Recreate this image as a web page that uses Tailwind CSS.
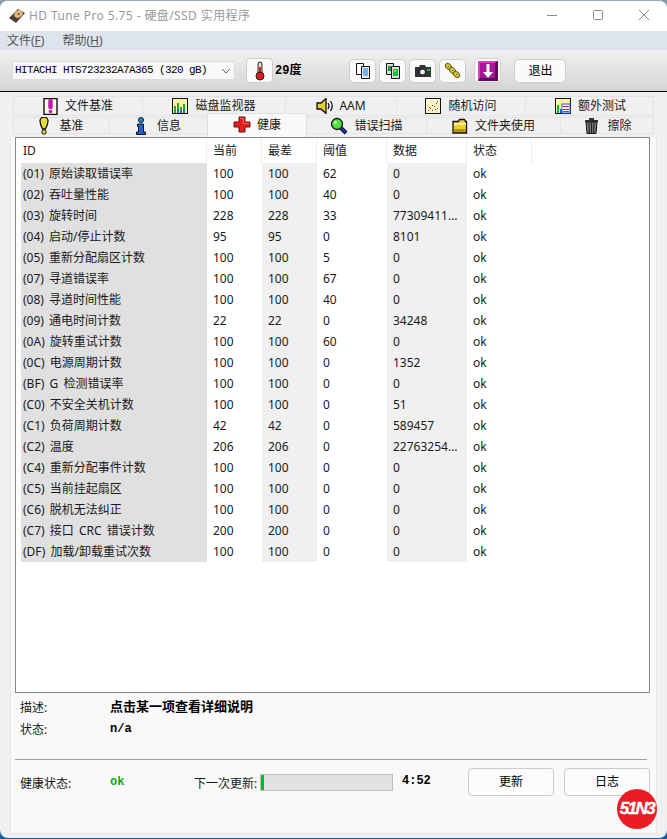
<!DOCTYPE html>
<html lang="zh-CN">

<head>
    <meta charset="UTF-8">
    <title>HD Tune Pro 5.75</title>
    <script src="https://cdn.jsdelivr.net/npm/@tailwindcss/browser@4"></script>
</head>

<body class="w-[667px] h-[839px] overflow-hidden bg-gradient-to-b from-[#8a9bb0] via-[#8a9bb0] to-[#17609c] text-[12px] text-[#1a1a1a] font-['Noto_Sans','Noto_Sans_CJK_SC',sans-serif]">
    <div class="relative w-[667px] h-[838px] rounded-lg border-t border-[#9aa7b5] overflow-hidden bg-[#f0f0f0] flex flex-col pb-[4px]">

        <!-- title bar -->
        <div class="h-[30px] bg-white flex items-center pl-[9px] shrink-0">
            <svg width="16" height="16" viewBox="0 0 16 16">
                <path d="M0 10 L9 1 L16 5 L7 15 Z" fill="#4a4036" />
                <ellipse cx="9.500" cy="6" rx="4.500" ry="3.500" fill="#e4b478" transform="rotate(-35 9.500 6)" />
                <circle cx="9.500" cy="6" r="1" fill="#5a4a38" />
            </svg>
            <span class="ml-[4px] text-[12px] tracking-[0.4px] text-[#9a9a9a]">HD Tune Pro 5.75 - 硬盘/SSD 实用程序</span>
            <div class="ml-auto flex items-center h-full">
                <svg width="46" height="30" viewBox="0 1 46 30"><path d="M18 15.500h10" stroke="#8a8a8a" /></svg>
                <svg width="46" height="30" viewBox="0 1 46 30"><rect x="18.500" y="10.500" width="9" height="9" rx="1" fill="none" stroke="#8a8a8a" /></svg>
                <svg width="46" height="30" viewBox="0 1 46 30"><path d="M18 10l10 10M28 10l-10 10" stroke="#8a8a8a" /></svg>
            </div>
        </div>

        <!-- menu -->
        <div class="h-[19px] bg-[#dde4ec] flex items-center pl-[7px] gap-[18px] text-[#555] shrink-0">
            <span>文件(<span class="underline">F</span>)</span>
            <span>帮助(<span class="underline">H</span>)</span>
        </div>

        <!-- toolbar -->
        <div class="h-[42px] bg-gradient-to-b from-[#f1f1f1] to-[#d4d4d4] border-b border-black flex items-center pl-[12px] shrink-0">
            <div class="w-[223px] h-[19px] bg-[#f8f8f8] border border-[#dcdcdc] rounded-[2px] flex items-center pl-[2px] font-['Liberation_Mono','Noto_Sans_CJK_SC',monospace] text-[11px] tracking-[-0.6px] text-black whitespace-nowrap">
                HITACHI HTS723232A7A365 (320 gB)
                <svg class="ml-auto mr-[3px]" width="10" height="6" viewBox="0 0 10 6"><path d="M1 1l4 4 4-4" fill="none" stroke="#666" /></svg>
            </div>
            <div class="ml-[11px] w-[27px] h-[25px] bg-[#fafafa] border border-[#cfcfcf] rounded-[4px] flex items-center justify-center">
                <svg width="10" height="20" viewBox="0 0 10 20">
                    <rect x="3" y="1" width="4" height="13" rx="2" fill="#f0d8c8" stroke="#222" />
                    <rect x="4" y="6" width="2" height="8" fill="#e01818" />
                    <circle cx="5" cy="15" r="4" fill="#e01818" stroke="#222" />
                </svg>
            </div>
            <span class="ml-[2px] font-['Liberation_Mono','Noto_Sans_CJK_SC',monospace] font-bold text-[12px] text-black">29度</span>
            <div class="ml-[48px] flex gap-[3px]">
                <div class="w-[27px] h-[24px] bg-[#fafafa] border border-[#cfcfcf] rounded-[5px] flex items-center justify-center">
                    <svg width="16" height="16" viewBox="0 0 16 16">
                        <path d="M1.500 .5h7v11h-7z" fill="#fff" stroke="#111" />
                        <path d="M6.500 3.500h8v12h-8z" fill="#e4ecf4" stroke="#111" />
                        <path d="M8 6h5M8 8h5M8 10h5M8 12h5" stroke="#1b6fd8" />
                    </svg>
                </div>
                <div class="w-[27px] h-[24px] bg-[#fafafa] border border-[#cfcfcf] rounded-[5px] flex items-center justify-center">
                    <svg width="16" height="16" viewBox="0 0 16 16">
                        <path d="M1.500 .5h7v11h-7z" fill="#ddd" stroke="#111" />
                        <path d="M6.500 3.500h8v12h-8z" fill="#ddd" stroke="#111" />
                        <rect x="3" y="3" width="3" height="5" fill="#10a030" />
                        <rect x="8" y="6" width="5" height="7" fill="#10c040" />
                        <rect x="9" y="7" width="2" height="2" fill="#d8c020" />
                    </svg>
                </div>
                <div class="w-[27px] h-[24px] bg-[#fafafa] border border-[#cfcfcf] rounded-[5px] flex items-center justify-center">
                    <svg width="16" height="14" viewBox="0 0 16 14">
                        <path d="M0 3h4l1-2h5l1 2h5v10H0z" fill="#333" />
                        <circle cx="7.500" cy="8" r="3" fill="#eee" stroke="#111" />
                        <rect x="12" y="5" width="3" height="2" fill="#20c040" />
                    </svg>
                </div>
                <div class="w-[27px] h-[24px] bg-[#fafafa] border border-[#cfcfcf] rounded-[5px] flex items-center justify-center">
                    <svg width="17" height="17" viewBox="0 0 17 17">
                        <g fill="#d8c41c" stroke="#5a5a10">
                            <ellipse cx="4.500" cy="4.500" rx="3.500" ry="2.500" transform="rotate(45 4.500 4.500)" />
                            <ellipse cx="8.500" cy="8.500" rx="3.500" ry="2.500" transform="rotate(45 8.500 8.500)" />
                            <ellipse cx="12.500" cy="12.500" rx="3.500" ry="2.500" transform="rotate(45 12.500 12.500)" />
                        </g>
                        <path d="M4 4l1 1M8 8l1 1M12 12l1 1" stroke="#5a5a10" />
                    </svg>
                </div>
            </div>
            <div class="ml-[8px] w-[27px] h-[25px] bg-[#fafafa] border border-[#cfcfcf] rounded-[5px] flex items-center justify-center">
                <svg width="20" height="20" viewBox="0 0 20 20">
                    <rect width="20" height="20" fill="#5e0c58" />
                    <path d="M0 0h19l-2 2H2v15l-2 2z" fill="#d040c8" />
                    <rect x="2" y="2" width="15" height="15" fill="#a8149c" />
                    <path d="M8.500 3h3v8h3.500l-5 6-5-6h3.500z" fill="#fff" />
                </svg>
            </div>
            <div class="ml-[13px] w-[52px] h-[24px] bg-[#fafafa] border border-[#cfcfcf] rounded-[5px] flex items-center justify-center text-black">退出</div>
        </div>

        <!-- tabs, first row -->
        <div class="mt-[4px] ml-[13px] w-[641px] h-[20px] flex shrink-0 relative">
            <div class="w-[130px] border border-[#e4e4e4] flex items-center justify-center gap-[7px]">
                <svg width="15" height="17" viewBox="0 0 15 17"><path d="M1 .5h13v16H1z" fill="#fff6e8" stroke="#111" stroke-width="1.400" /><path d="M7.500 3v6" stroke="#c01ab0" stroke-width="4.500" stroke-linecap="round" /><circle cx="7.500" cy="13.500" r="1.800" fill="#c01ab0" /></svg>
                <span>文件基准</span>
            </div>
            <div class="w-[143px] border-y border-r border-[#e4e4e4] flex items-center justify-center gap-[7px]">
                <svg width="16" height="16" viewBox="0 0 16 16"><rect x=".5" y=".5" width="15" height="15" fill="#fff3a0" stroke="#111" /><path d="M2 15V8h2v7zM5 15V5h2v10zM8 15V9h2v6zM11 15V6h2v9z" fill="#12b030" /><path d="M5 15v-4h2v4zM8 15v-3h2v3zM11 15v-3h2v3z" fill="#1f5fe0" /></svg>
                <span>磁盘监视器</span>
            </div>
            <div class="w-[111px] border-y border-r border-[#e4e4e4] flex items-center justify-center gap-[5px]">
                <svg width="18" height="16" viewBox="0 0 18 16"><path d="M1 5h4l5-4.500v15L5 11H1z" fill="#e8d030" stroke="#111" stroke-width="1.300" /><path d="M12 5q2 3 0 6M14.500 3q3.500 5 0 10" fill="none" stroke="#111" stroke-width="1.300" /></svg>
                <span>AAM</span>
            </div>
            <div class="w-[129px] border-y border-r border-[#e4e4e4] flex items-center justify-center gap-[7px]">
                <svg width="16" height="16" viewBox="0 0 16 16"><rect x=".5" y=".5" width="15" height="15" fill="#fff6c8" stroke="#111" /><path d="M3 12h1v1H3zM5 10h1v1H5zM7 12h1v1H7zM9 8h1v1H9zM11 5h1v1h-1zM12 10h1v1h-1z" fill="#d01818" /><path d="M4 9h1v1H4zM7 7h1v1H7zM10 11h1v1h-1zM12 3h1v1h-1z" fill="#1840d0" /></svg>
                <span>随机访问</span>
            </div>
            <div class="w-[128px] border-y border-r border-[#e4e4e4] pl-[2px] flex items-center justify-center gap-[7px]">
                <svg width="16" height="16" viewBox="0 0 16 16"><rect x=".5" y=".5" width="15" height="15" fill="#fff3a0" stroke="#111" /><path d="M2 15V7h2v8z" fill="#12b030" /><path d="M5 15v-4h2v4z" fill="#1f5fe0" /><rect x="7" y="6" width="8" height="9" fill="#fff" stroke="#1f5fe0" /><path d="M8 8h6v1H8zM8 11h6v1H8z" fill="#d02020" /><path d="M8 13h6v1H8z" fill="#1f5fe0" /></svg>
                <span>额外测试</span>
            </div>
        </div>

        <!-- tabs, second row -->
        <div class="ml-[13px] w-[641px] h-[21px] flex relative z-10 shrink-0">
            <div class="w-[97px] mt-[1px] mb-[3px] border border-[#e4e4e4] flex items-center justify-center gap-[10px]">
                <svg class="shrink-0" width="10" height="18" viewBox="0 0 10 18"><path d="M1 4a4 4 0 0 1 8 0q0 3-2.500 8h-3Q1 7 1 4z" fill="#e8dc30" stroke="#111" stroke-width="1.300" /><circle cx="5" cy="15" r="2.200" fill="#e8dc30" stroke="#111" /></svg>
                <span>基准</span>
            </div>
            <div class="w-[97px] mt-[1px] mb-[3px] border-y border-[#e4e4e4] flex items-center justify-center gap-[11px]">
                <svg class="shrink-0" width="10" height="18" viewBox="0 0 10 18"><circle cx="5" cy="3" r="2.500" fill="#1f8fe8" stroke="#111" /><path d="M1.500 7h6v8H9.500v2.500H.5V15h2V9.500h-1z" fill="#1f5fd0" stroke="#111" /></svg>
                <span>信息</span>
            </div>
            <div class="w-[100px] -mt-[3px] mb-0 pb-[2px] h-[24px] bg-[#f9f9f9] border border-b-0 border-[#e0e0e0] flex items-center justify-center gap-[6px]">
                <svg class="shrink-0" width="18" height="17" viewBox="0 0 18 17"><path d="M6 1h6v5h5v5h-5v5H6v-5H1V6h5z" fill="#e02020" stroke="#701010" /><path d="M7 2h4v5h5v1H10V3H7z" fill="#f06060" /></svg>
                <span>健康</span>
            </div>
            <div class="w-[119px] mt-[1px] mb-[3px] border-y border-[#e4e4e4] flex items-center justify-center gap-[6px]">
                <svg class="shrink-0" width="18" height="18" viewBox="0 0 18 18"><path d="M10.500 10.500l5.500 5.500" stroke="#111" stroke-width="4" /><path d="M10.500 10.500l5.500 5.500" stroke="#1830c0" stroke-width="2.200" /><circle cx="7" cy="7" r="5.500" fill="#50e040" stroke="#111" stroke-width="1.300" /><circle cx="5.500" cy="5.500" r="1.500" fill="#c8ffc0" /></svg>
                <span>错误扫描</span>
            </div>
            <div class="w-[134px] mt-[1px] mb-[3px] border-y border-l border-[#e4e4e4] flex items-center justify-center gap-[7px]">
                <svg class="shrink-0" width="16" height="16" viewBox="0 0 16 16"><path d="M1 3.500h5.500l1-2h5l1 2h1v11.500H1z" fill="#f0d030" stroke="#111" stroke-width="1.300" /><path d="M2 5h12v2H2z" fill="#fff0a0" /><path d="M2 11h12v3H2z" fill="#b89010" /></svg>
                <span>文件夹使用</span>
            </div>
            <div class="w-[94px] mt-[1px] mb-[3px] border border-[#e4e4e4] pl-[2px] flex items-center justify-center gap-[8px]">
                <svg class="shrink-0" width="15" height="17" viewBox="0 0 15 17"><path d="M1 3h13v2H1zM5 1h5v2H5z" fill="#333" /><path d="M2 5h11l-1 11.500H3z" fill="#777" stroke="#111" /><path d="M5 6l.4 10M7.500 6v10M10 6l-.4 10" stroke="#222" /></svg>
                <span>擦除</span>
            </div>
        </div>

        <!-- panel -->
        <div class="relative ml-[10px] mr-[10px] flex-1 bg-[#f9f9f9] border-x border-b border-[#e6e6e6] pl-[4px] pr-[6px] flex flex-col">
            <!-- table -->
            <div class="h-[556px] bg-white border border-[#83868f] shrink-0 overflow-hidden">
                <div class="grid grid-cols-[191px_55px_55px_70px_80px_65px] h-[25px] items-center">
                    <span class="pl-[7px] h-full flex items-center border-r-[1px] border-[#eeeeee]">ID</span>
                    <span class="pl-[6px] h-full flex items-center border-r-[1px] border-[#eeeeee]">当前</span>
                    <span class="pl-[6px] h-full flex items-center border-r-[1px] border-[#eeeeee]">最差</span>
                    <span class="pl-[6px] h-full flex items-center border-r-[1px] border-[#eeeeee]">阈值</span>
                    <span class="pl-[6px] h-full flex items-center border-r-[1px] border-[#eeeeee]">数据</span>
                    <span class="pl-[6px] h-full flex items-center border-r-[1px] border-[#eeeeee]">状态</span>
                </div>
                <div id="rows"></div>
            </div>

            <!-- details -->
            <div class="pl-[5px] pt-[6px] h-[66px] shrink-0">
                <div class="h-[22px] flex">
                    <span class="w-[90px]">描述:</span>
                    <span class="-mt-[3px] font-bold text-[13px] text-black font-['Noto_Sans_CJK_SC',sans-serif]">点击某一项查看详细说明</span>
                </div>
                <div class="h-[22px] flex">
                    <span class="w-[90px]">状态:</span>
                    <span class="-mt-[1px] font-bold text-[12px] text-black font-['Liberation_Mono',monospace]">n/a</span>
                </div>
            </div>
            <div class="border-t border-[#a0a0a0] mr-[3px] shrink-0"></div>

            <!-- bottom row -->
            <div class="pl-[5px] pt-[8px] flex items-start shrink-0">
                <span class="w-[90px] mt-[7px]">健康状态:</span>
                <span class="w-[84px] mt-[5px] font-bold text-[#12a812] text-[12px] font-['Liberation_Mono',monospace]">ok</span>
                <span class="mt-[7px] w-[66px] whitespace-nowrap">下一次更新:</span>
                <div class="mt-[6px] w-[133px] h-[17px] bg-[#e2e2e2] border border-[#bfbfbf]">
                    <div class="w-[3px] h-full bg-[#0fb52f]"></div>
                </div>
                <span class="ml-[9px] w-[29px] mt-[4px] font-bold text-[12px] text-black font-['Liberation_Mono',monospace]">4:52</span>
                <div class="ml-[37px] w-[86px] h-[28px] bg-[#fbfbfb] border border-[#cdcdcd] rounded-[4px] flex items-center justify-center text-black">更新</div>
                <div class="ml-[10px] w-[86px] h-[28px] bg-[#fbfbfb] border border-[#cdcdcd] rounded-[4px] flex items-center justify-center text-black">日志</div>
            </div>
        </div>

        <!-- site watermark -->
        <div class="absolute left-[617px] top-[788px] w-[40px] h-[40px] rounded-full bg-[#ec1c24] flex items-center justify-center text-white font-bold italic text-[17px] tracking-[-1.5px] [-webkit-text-stroke:0.4px_white] font-['Liberation_Sans',sans-serif]">51N3</div>
    </div>

    <script>
        const smart = [
            ["(01) 原始读取错误率", 100, 100, 62, "0"],
            ["(02) 吞吐量性能", 100, 100, 40, "0"],
            ["(03) 旋转时间", 228, 228, 33, "77309411..."],
            ["(04) 启动/停止计数", 95, 95, 0, "8101"],
            ["(05) 重新分配扇区计数", 100, 100, 5, "0"],
            ["(07) 寻道错误率", 100, 100, 67, "0"],
            ["(08) 寻道时间性能", 100, 100, 40, "0"],
            ["(09) 通电时间计数", 22, 22, 0, "34248"],
            ["(0A) 旋转重试计数", 100, 100, 60, "0"],
            ["(0C) 电源周期计数", 100, 100, 0, "1352"],
            ["(BF) G 检测错误率", 100, 100, 0, "0"],
            ["(C0) 不安全关机计数", 100, 100, 0, "51"],
            ["(C1) 负荷周期计数", 42, 42, 0, "589457"],
            ["(C2) 温度", 206, 206, 0, "22763254..."],
            ["(C4) 重新分配事件计数", 100, 100, 0, "0"],
            ["(C5) 当前挂起扇区", 100, 100, 0, "0"],
            ["(C6) 脱机无法纠正", 100, 100, 0, "0"],
            ["(C7) 接口 CRC 错误计数", 200, 200, 0, "0"],
            ["(DF) 加载/卸载重试次数", 100, 100, 0, "0"]
        ];

        const rows = document.getElementById("rows");
        smart.forEach(row => {
            const el = document.createElement("div");
            el.className = "grid grid-cols-[186px_55px_55px_70px_80px_65px] ml-[5px] h-[21px] items-center";
            el.innerHTML = `
                <span class="h-full pl-[2px] flex items-center whitespace-pre [word-spacing:2px] bg-[#e0e0e0]">${row[0]}</span>
                <span class="h-full pl-[6px] flex items-center">${row[1]}</span>
                <span class="h-full pl-[6px] flex items-center bg-[#f0f0f0]">${row[2]}</span>
                <span class="h-full pl-[6px] flex items-center">${row[3]}</span>
                <span class="h-full pl-[6px] flex items-center bg-[#f0f0f0]">${row[4]}</span>
                <span class="h-full pl-[6px] flex items-center">ok</span>`;
            rows.appendChild(el);
        });
    </script>
</body>

</html>
